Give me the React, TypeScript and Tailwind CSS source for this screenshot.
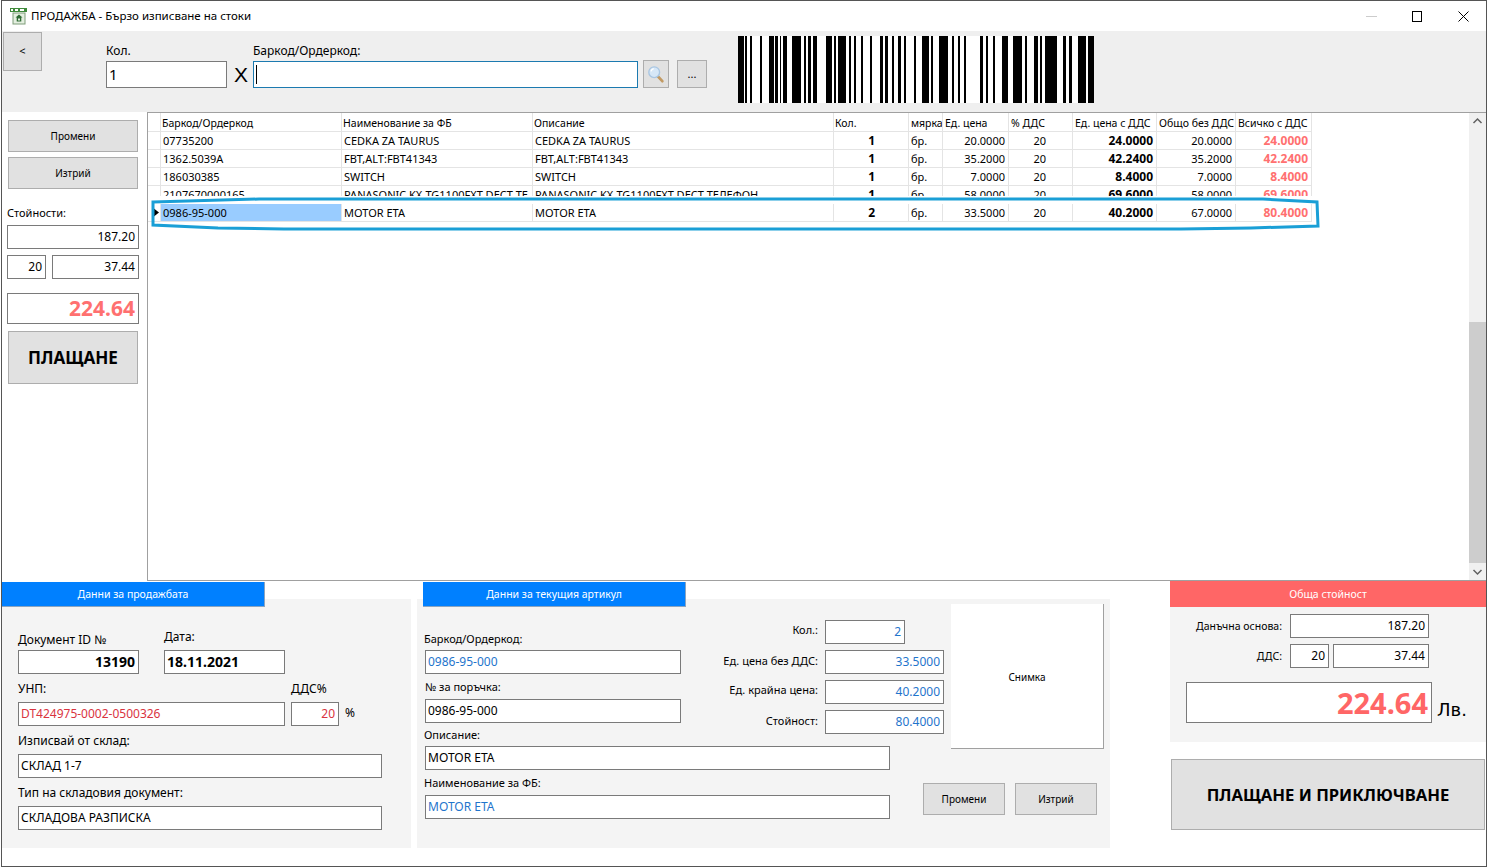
import type { ReactNode } from "react";

const columnGrid = "grid grid-cols-[13px_181px_191px_301px_75px_34px_66px_64px_84px_79px_76px]";

const headers = ["", "Баркод/Ордеркод", "Наименование за ФБ", "Описание", "Кол.", "мярка", "Ед. цена", "% ДДС", "Ед. цена с ДДС", "Общо без ДДС", "Всичко с ДДС"];

const rows = [
  ["07735200", "CEDKA ZA TAURUS", "CEDKA ZA TAURUS", "1", "бр.", "20.0000", "20", "24.0000", "20.0000", "24.0000"],
  ["1362.5039A", "FBT,ALT:FBT41343", "FBT,ALT:FBT41343", "1", "бр.", "35.2000", "20", "42.2400", "35.2000", "42.2400"],
  ["186030385", "SWITCH", "SWITCH", "1", "бр.", "7.0000", "20", "8.4000", "7.0000", "8.4000"],
  ["2107670000165", "PANASONIC KX-TG1100FXT DECT TE", "PANASONIC KX-TG1100FXT DECT ТЕЛЕФОН", "1", "бр.", "58.0000", "20", "69.6000", "58.0000", "69.6000"],
  ["0986-95-000", "MOTOR ETA", "MOTOR ETA", "2", "бр.", "33.5000", "20", "40.2000", "67.0000", "80.4000"],
];

const cellStyles = [
  "pl-[2px]",
  "pl-[2px]",
  "pl-[2px]",
  "pr-[33px] text-right font-bold text-[12px]",
  "pl-[2px]",
  "pr-[3px] text-right",
  "pr-[26px] text-right",
  "pr-[3px] text-right font-bold text-[12px]",
  "pr-[3px] text-right",
  "pr-[3px] text-right font-bold text-[12px] text-[#ff7070]",
];

// bar edges measured off the reference, in its zoomed pixels
const bars = [
  [37, 49], [51, 55], [62, 66], [82, 86], [100, 110], [113, 118], [122, 125], [128, 138], [147, 165], [172, 176], [181, 186],
  [190, 199], [217, 229], [233, 238], [242, 258], [263, 268], [275, 279], [289, 293], [307, 311], [327, 333], [338, 344],
  [351, 355], [365, 370], [376, 380], [397, 401], [413, 427], [431, 435], [449, 467], [474, 478], [487, 491], [499, 503],
  [532, 537], [544, 549], [558, 562], [577, 590], [600, 618], [624, 627], [642, 650], [655, 659], [665, 690], [702, 708],
  [713, 719], [732, 748], [752, 765],
];

function Field({ className = "", focused, children }: { className?: string; focused?: boolean; children?: ReactNode }) {
  return (
    <div className={`h-6 shrink-0 border ${focused ? "border-[#1c7ab0]" : "border-[#7a7a7a]"} bg-white px-[2px] flex items-center whitespace-nowrap text-[12px] ${className}`}>
      {children}
    </div>
  );
}

function GrayButton({ className = "", children }: { className?: string; children: ReactNode }) {
  return (
    <div className={`shrink-0 border border-[#adadad] bg-[#e1e1e1] flex items-center justify-center ${className}`}>
      {children}
    </div>
  );
}

function Heading({ children, className = "" }: { children: ReactNode; className?: string }) {
  return <div className={`h-[25px] pt-[2px] flex items-center justify-center text-white text-[10.5px] ${className}`}>{children}</div>;
}

function Barcode() {
  return (
    <svg width="356" height="67" viewBox="37 0 728 67" preserveAspectRatio="none" shapeRendering="crispEdges" className="mt-[5px] ml-[31px] bg-white">
      {bars.map(([a, b]) => (
        <rect key={a} x={a} y="0" width={b - a} height="67" fill="#000" />
      ))}
    </svg>
  );
}

function TitleIcon() {
  return (
    <svg width="17" height="17" viewBox="0 0 17 17" className="ml-[8px] mr-[4px]">
      <rect x="0" y="0" width="17" height="4" fill="#3f8a3a" />
      <rect x="1" y="1" width="2" height="2" fill="#fff" />
      <rect x="5" y="1" width="3" height="2" fill="#fff" />
      <rect x="10" y="1" width="4" height="2" fill="#fff" />
      <rect x="3" y="5" width="12" height="11" fill="#e4efe0" stroke="#7f9d7a" />
      <path d="M9 6.5 5.5 9.5h1.2v4h4.6v-4h1.2z" fill="#2f6b34" />
      <rect x="8" y="10.5" width="2" height="2" fill="#e4efe0" />
    </svg>
  );
}

function TitleBar() {
  return (
    <div className="h-[30px] bg-white flex items-center">
      <TitleIcon />
      <span className="text-[11.5px] text-black">ПРОДАЖБА - Бързо изписване на стоки</span>
      <div className="ml-auto flex items-center">
        <svg width="11" height="11" viewBox="0 0 11 11" className="mr-[35px]">
          <path d="M0 5.5h11" stroke="#cccccc" />
        </svg>
        <svg width="11" height="11" viewBox="0 0 11 11" className="mr-[35px]">
          <rect x="0.5" y="0.5" width="9" height="10" fill="none" stroke="#000" />
        </svg>
        <svg width="11" height="11" viewBox="0 0 11 11" className="mr-[17px]">
          <path d="M0.5 0.5l10 10M10.5 0.5l-10 10" stroke="#000" />
        </svg>
      </div>
    </div>
  );
}

function Toolbar() {
  return (
    <div className="h-[81px] bg-[#efefef] flex items-start">
      <GrayButton className="ml-px mt-px w-[39px] h-[39px] text-[11px]">&lt;</GrayButton>
      <div className="ml-[64px]">
        <div className="h-[30px] flex items-end pb-[2px] text-[12px] leading-4">Кол.</div>
        <Field className="w-[121px] h-[27px] text-[15px]">1</Field>
      </div>
      <div className="w-[26px] mt-[30px] pl-[2px] h-[27px] flex items-center justify-center text-[21px] leading-none font-['Liberation_Sans']">X</div>
      <div>
        <div className="h-[30px] flex items-end pb-[2px] text-[12px] leading-4">Баркод/Ордеркод:</div>
        <Field focused className="w-[385px] h-[27px] text-[15px]">
          <span className="w-px h-[19px] bg-black" />
        </Field>
      </div>
      <GrayButton className="ml-[5px] mt-[29px] w-[26px] h-[28px]">
        <svg width="18" height="18" viewBox="0 0 20 20">
          <path d="M12 12.5 17 18" stroke="#c29a63" strokeWidth="3" strokeLinecap="round" />
          <circle cx="8" cy="8" r="6" fill="#d6e7f7" stroke="#a9c6e2" strokeWidth="1.5" />
          <path d="M4.5 7a4 4 0 0 1 3-3" stroke="#fff" strokeWidth="1.5" fill="none" />
        </svg>
      </GrayButton>
      <GrayButton className="ml-[8px] mt-[29px] w-[30px] h-[28px] text-[11px]">...</GrayButton>
      <Barcode />
    </div>
  );
}

function SidePanel() {
  return (
    <div className="w-[145px] shrink-0 bg-white flex flex-col pl-[5px]">
      <GrayButton className="ml-px mt-2 w-[130px] h-[32px] text-[10px]">Промени</GrayButton>
      <GrayButton className="ml-px mt-[5px] w-[130px] h-[32px] text-[10px]">Изтрий</GrayButton>
      <div className="mt-[14px] h-5 flex items-center text-[11px]">Стойности:</div>
      <Field className="mt-[2px] w-[132px] justify-end pr-[3px]">187.20</Field>
      <div className="mt-[6px] flex gap-[6px]">
        <Field className="w-[39px] justify-end pr-[3px]">20</Field>
        <Field className="w-[87px] justify-end pr-[3px]">37.44</Field>
      </div>
      <Field className="mt-[14px] w-[132px] h-[31px] justify-end pr-[3px] font-bold text-[21px] text-[#ff7070]">224.64</Field>
      <GrayButton className="ml-px mt-[7px] w-[130px] h-[53px] font-bold text-[17px]">ПЛАЩАНЕ</GrayButton>
    </div>
  );
}

function Scrollbar() {
  return (
    <div className="ml-auto w-[17px] shrink-0 bg-[#f0f0f0] flex flex-col items-center">
      <svg width="17" height="17" viewBox="0 0 17 17" className="shrink-0">
        <path d="M4.5 10 8.5 6l4 4" fill="none" stroke="#606060" strokeWidth="1.5" />
      </svg>
      <div className="h-[192px] shrink-0" />
      <div className="h-[241px] w-full shrink-0 bg-[#cdcdcd]" />
      <div className="flex-1" />
      <svg width="17" height="17" viewBox="0 0 17 17" className="shrink-0">
        <path d="M4.5 7 8.5 11l4-4" fill="none" stroke="#606060" strokeWidth="1.5" />
      </svg>
    </div>
  );
}

function DataGrid() {
  return (
    <div className="relative flex-1 h-[469px] flex border-t border-l border-b border-[#a0a0a0] bg-white text-[11px] leading-none">
      <div>
        <div className={`${columnGrid} h-[19px] text-[10.5px]`}>
          {headers.map((h, i) => (
            <div key={i} className={`border-r border-b border-[#e4e4e4] pt-[2px] flex items-center whitespace-nowrap overflow-hidden ${i > 4 ? "pl-[2px]" : "pl-px"}`}>
              {h}
            </div>
          ))}
        </div>
        {rows.map((row, r) => (
          <div key={r} className={`${columnGrid} h-[18px] relative`}>
            <div className="border-r border-b border-[#e4e4e4] flex items-center pl-[4px]">
              {r === 4 && (
                <svg width="7" height="11" viewBox="0 0 7 11" className="shrink-0">
                  <path d="M0 0l7 5.5-7 5.5z" fill="#000" />
                </svg>
              )}
            </div>
            {row.map((v, c) => (
              <div
                key={c}
                className={`border-r border-b border-[#e4e4e4] leading-[17px] whitespace-nowrap overflow-hidden ${cellStyles[c]} ${r === 4 && c === 0 ? "bg-[#99ccff]" : ""}`}
              >
                {v}
              </div>
            ))}
            {r === 3 && <div className="absolute inset-x-0 bottom-0 h-[8px] bg-white" />}
          </div>
        ))}
      </div>
      <svg width="1190" height="50" viewBox="147 190 1190 50" className="absolute left-0 top-[78px] pointer-events-none">
        <path
          d="M152 201 L258 198 L600 198 L1262 198 L1316 201 L1317 225 L1250 227 L1180 228 L283 228 L217 227 L152 224 Z"
          fill="none"
          stroke="#1a9fd6"
          strokeWidth="3"
        />
      </svg>
      <Scrollbar />
    </div>
  );
}

function SalePanel() {
  return (
    <div className="w-[409px] h-[249px] mt-[18px] bg-[#f4f4f4] shrink-0">
      <Heading className="-mt-[17px] w-[263px] bg-[#0080ff] border-r border-b border-[#8aa4c0]">Данни за продажбата</Heading>
      <div className="pl-4 flex gap-[25px] mt-[22px] text-[12px] leading-none">
        <div>
          <div className="h-[21px] flex items-center">Документ ID №</div>
          <Field className="w-[121px] justify-end pr-[3px] font-bold text-[14px]">13190</Field>
        </div>
        <div>
          <div className="h-[21px] pt-[2px] flex items-start">Дата:</div>
          <Field className="w-[121px] font-bold text-[14px]">18.11.2021</Field>
        </div>
      </div>
      <div className="pl-4 text-[12px] leading-none">
        <div className="flex">
          <div className="w-[273px] h-7 pt-[2px] flex items-center">УНП:</div>
          <div className="h-7 pt-[2px] flex items-center">ДДС%</div>
        </div>
        <div className="flex items-center gap-[6px]">
          <Field className="w-[267px] text-[12.5px] text-[#d9343f]">DT424975-0002-0500326</Field>
          <Field className="w-[48px] justify-end pr-[3px] text-[#d9343f]">20</Field>
          <span className="mb-[2px]">%</span>
        </div>
        <div className="h-7 pt-[2px] flex items-center">Изписвай от склад:</div>
        <Field className="w-[364px]">СКЛАД 1-7</Field>
        <div className="h-7 pt-[2px] flex items-center">Тип на складовия документ:</div>
        <Field className="w-[364px]">СКЛАДОВА РАЗПИСКА</Field>
      </div>
    </div>
  );
}

function PriceRow({ label, value, labelClass, wide }: { label: string; value: string; labelClass: string; wide?: boolean }) {
  return (
    <div className="flex items-center gap-[7px]">
      <div className={`w-[138px] text-right text-[11px] leading-none ${labelClass}`}>{label}</div>
      <Field className={`${wide ? "w-[119px]" : "w-[80px]"} justify-end pr-[3px] text-[#1f75cc]`}>{value}</Field>
    </div>
  );
}

function ItemPanel() {
  return (
    <div className="w-[693px] h-[249px] mt-[18px] ml-[6px] bg-[#f4f4f4] shrink-0">
      <Heading className="-mt-[17px] ml-[6px] w-[263px] bg-[#0080ff] border-r border-b border-[#8aa4c0]">Данни за текущия артикул</Heading>
      <div className="flex h-[139px] pl-2 text-[11px] leading-none">
        <div className="w-[255px] shrink-0">
          <div className="h-[43px] -ml-px flex items-end pb-[6px]">Баркод/Ордеркод:</div>
          <Field className="w-[256px] text-[#1f75cc]">0986-95-000</Field>
          <div className="h-[25px] flex items-center">№ за поръчка:</div>
          <Field className="w-[256px]">0986-95-000</Field>
          <div className="h-[23px] -ml-px flex items-center">Описание:</div>
        </div>
        <div className="pt-[13px] flex flex-col gap-[6px] w-[264px] shrink-0">
          <PriceRow label="Кол.:" value="2" labelClass="mb-[6px]" />
          <PriceRow label="Ед. цена без ДДС:" value="33.5000" labelClass="mb-[3px]" wide />
          <PriceRow label="Ед. крайна цена:" value="40.2000" labelClass="mb-[6px]" wide />
          <PriceRow label="Стойност:" value="80.4000" labelClass="mb-[4px]" wide />
        </div>
        <div className="-mt-[3px] ml-[7px] w-[153px] h-[145px] pt-[2px] shrink-0 bg-white border-r border-b border-[#a0a0a0] flex items-center justify-center text-[10px]">
          Снимка
        </div>
      </div>
      <div className="flex pl-2 text-[11px] leading-none">
        <div className="w-[465px] shrink-0">
          <Field>MOTOR ETA</Field>
          <div className="h-[25px] -ml-px flex items-center">Наименование за ФБ:</div>
          <Field className="text-[#1f75cc]">MOTOR ETA</Field>
        </div>
        <div className="flex gap-[10px] ml-[33px] mt-[37px] text-[10px]">
          <GrayButton className="w-[82px] h-[32px]">Промени</GrayButton>
          <GrayButton className="w-[82px] h-[32px]">Изтрий</GrayButton>
        </div>
      </div>
    </div>
  );
}

function TotalPanel() {
  return (
    <div className="ml-[60px] flex-1">
      <div className="h-[161px] bg-[#f4f4f4]">
        <Heading className="h-[26px] bg-[#ff6666]">Обща стойност</Heading>
        <div className="mt-[7px] flex items-center gap-[8px] text-[10.5px]">
          <div className="w-[112px] pt-[2px] text-right">Данъчна основа:</div>
          <Field className="w-[139px] justify-end pr-[3px]">187.20</Field>
        </div>
        <div className="mt-[6px] flex items-center text-[10.5px]">
          <div className="w-[112px] pt-[2px] text-right mr-[8px]">ДДС:</div>
          <Field className="w-[39px] justify-end pr-[3px] mr-[4px]">20</Field>
          <Field className="w-[96px] justify-end pr-[3px]">37.44</Field>
        </div>
        <div className="mt-[14px] ml-[16px] flex items-end gap-[5px]">
          <Field className="w-[246px] h-[41px] justify-end pr-[3px] font-bold text-[29px] text-[#ff6666]">224.64</Field>
          <span className="text-[18px] leading-[26px] font-['DejaVu_Sans']">Лв.</span>
        </div>
      </div>
      <GrayButton className="mt-[17px] ml-px w-[314px] h-[71px] pt-[1px] font-bold text-[16.6px]">ПЛАЩАНЕ И ПРИКЛЮЧВАНЕ</GrayButton>
    </div>
  );
}

export default function App() {
  return (
    <div className="w-[1487px] h-[868px] bg-white pl-px overflow-hidden font-['Noto_Sans'] text-black">
      <div className="h-[867px] border border-[#555555] bg-white flex flex-col">
        <TitleBar />
        <Toolbar />
        <div className="flex">
          <SidePanel />
          <DataGrid />
        </div>
        <div className="flex">
          <SalePanel />
          <ItemPanel />
          <TotalPanel />
        </div>
      </div>
    </div>
  );
}
